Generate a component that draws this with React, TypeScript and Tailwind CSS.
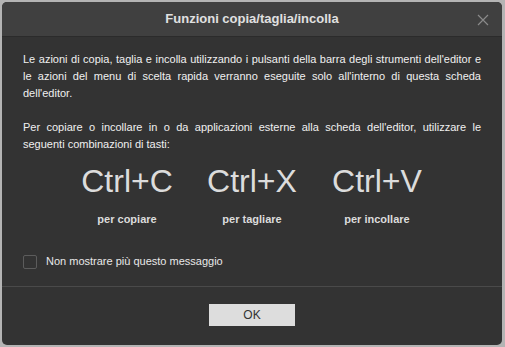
export default function App() {
  const keys = [
    { combo: 'Ctrl+C', label: 'per copiare' },
    { combo: 'Ctrl+X', label: 'per tagliare' },
    { combo: 'Ctrl+V', label: 'per incollare' },
  ];

  return (
    <div className="w-[505px] h-[347px] bg-[#b4b4b4] pt-[2px] pl-[2px] overflow-hidden" style={{ fontFamily: '"Liberation Sans", Arial, sans-serif' }}>
      <div className="w-[500px] h-[343px] bg-[#333333] rounded-[5px] flex flex-col overflow-hidden">
        {/* header */}
        <div className="relative h-[35px] bg-[#404040] border-b border-[#2b2b2b] flex items-center justify-center">
          <span className="text-[13px] font-bold text-[#e0e0e0]">Funzioni copia/taglia/incolla</span>
          <svg className="absolute right-[13px] top-[12px]" width="12" height="12" viewBox="0 0 12 12">
            <path d="M1 1L11 11M11 1L1 11" stroke="#8a8a8a" strokeWidth="1.2" />
          </svg>
        </div>

        {/* body */}
        <div className="flex-1 px-[21px] pt-[14px] text-[11px] leading-[17px] text-[#f0f0f0]">
          <p className="text-justify">
            Le azioni di copia, taglia e incolla utilizzando i pulsanti della barra degli strumenti dell'editor e le azioni del menu di scelta rapida verranno eseguite solo all'interno di questa scheda dell'editor.
          </p>
          <p className="text-justify mt-[17px]">
            Per copiare o incollare in o da applicazioni esterne alla scheda dell'editor, utilizzare le seguenti combinazioni di tasti:
          </p>

          <div className="flex justify-center mt-[8px]">
            {keys.map((k) => (
              <div key={k.combo} className="w-[125px] flex flex-col items-center">
                <span className="text-[32px] leading-[40px] text-[#dcdcdc]">{k.combo}</span>
                <span className="mt-[10px] text-[11px] font-bold text-[#dcdcdc]">{k.label}</span>
              </div>
            ))}
          </div>

          <label className="flex items-center gap-[9px] mt-[25px]">
            <span className="w-[14px] h-[14px] border border-[#5c5c5c] rounded-[2px]" />
            <span className="text-[11px] text-[#e8e8e8]">Non mostrare più questo messaggio</span>
          </label>
        </div>

        {/* footer */}
        <div className="h-[59px] border-t border-[#4a4a4a] flex items-center justify-center pb-[2px]">
          <button className="w-[86px] h-[22px] bg-[#dddddd] text-[#333] text-[12px]">OK</button>
        </div>
      </div>
    </div>
  );
}
